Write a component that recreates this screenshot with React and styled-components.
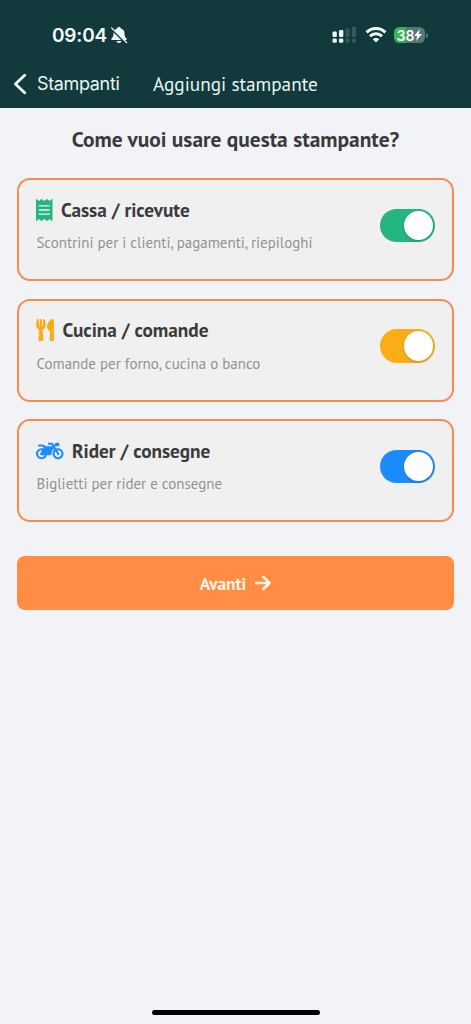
import { useState } from "react";
import styled, { createGlobalStyle } from "styled-components";
import { FaMotorcycle, FaReceipt, FaUtensils } from "react-icons/fa";

const GlobalStyle = createGlobalStyle`
  * {
    box-sizing: border-box;
  }

  body {
    margin: 0;
    background: #f1f3f7;
    font-family: "PT Sans", "Open Sans", "Noto Sans", sans-serif;
    color: #3a3a3c;
  }
`;

const Screen = styled.div`
  width: 100%;
  max-width: 471px;
  height: 1024px;
  display: flex;
  flex-direction: column;
  background: #f1f3f7;
`;

const Header = styled.header`
  height: 107.5px;
  background: #12393b;
  color: #e6f6f4;
`;

const StatusBar = styled.div`
  height: 60px;
  padding: 10px 43.5px 0 52px;
  display: flex;
  align-items: center;
  justify-content: space-between;
`;

const StatusGroup = styled.div`
  display: flex;
  align-items: center;
  gap: ${({ $gap }) => $gap}px;
`;

const Clock = styled.span`
  padding-top: 1px;
  font-family: Inter, sans-serif;
  font-size: 19px;
  font-weight: 600;
  line-height: 24px;
  letter-spacing: -0.2px;
  color: #f4fffc;
`;

const Battery = styled.div`
  display: flex;
  align-items: center;
  gap: 1px;
`;

const BatteryBody = styled.div`
  width: 31px;
  height: 16.5px;
  border-radius: 5.5px;
  display: flex;
  align-items: center;
  justify-content: center;
  background: linear-gradient(90deg, #34b752 38%, #577674 38%);
  font-family: Inter, sans-serif;
  font-size: 14px;
  font-weight: 600;
  color: #ffffff;
`;

const BatteryCap = styled.div`
  width: 1.5px;
  height: 5px;
  border-radius: 0 2px 2px 0;
  background: #577674;
`;

const NavBar = styled.nav`
  height: 47px;
  padding-left: 13px;
  display: flex;
  align-items: center;
`;

const BackButton = styled.button`
  width: 140px;
  padding: 0;
  border: 0;
  display: flex;
  align-items: center;
  gap: 10px;
  background: none;
  color: inherit;
  font-family: Inter, sans-serif;
  font-size: 18px;
  letter-spacing: -0.35px;
  cursor: pointer;
`;

const NavTitle = styled.span`
  font-size: 19.25px;
  line-height: 24px;
`;

const Content = styled.main`
  flex: 1;
  padding: 16.5px 17px 0;
  display: flex;
  flex-direction: column;
`;

const Question = styled.h1`
  margin: 0 0 24px;
  font-size: 21.4px;
  font-weight: 700;
  line-height: 30px;
  text-align: center;
`;

const CardList = styled.div`
  display: flex;
  flex-direction: column;
  gap: 17.5px;
`;

const Card = styled.section`
  height: 103px;
  padding: 0 17px 0 17.4px;
  border: 2px solid #f58d50;
  border-radius: 13px;
  display: flex;
  justify-content: space-between;
  background: #f0f0f0;
`;

const CardTitle = styled.h2`
  margin: 16.9px 0 0;
  height: 26px;
  display: flex;
  align-items: center;
  gap: 8px;
  font-size: 19.25px;
  font-weight: 700;
  line-height: 26px;

  svg {
    width: ${({ $iconWidth }) => $iconWidth}px;
    height: 22px;
    flex: none;
    color: ${({ $color }) => $color};
  }
`;

const CardText = styled.p`
  margin: 9.6px 0 0;
  font-size: 15px;
  line-height: 22px;
  color: #929295;
`;

const Switch = styled.button`
  width: 55px;
  height: 33.5px;
  margin-top: 28.5px;
  padding: 2px;
  border: 0;
  border-radius: 17px;
  display: flex;
  justify-content: ${({ $on }) => ($on ? "flex-end" : "flex-start")};
  background: ${({ $on, $color }) => ($on ? $color : "#d1d1d6")};
  cursor: pointer;
`;

const Knob = styled.span`
  width: 29.5px;
  height: 29.5px;
  border-radius: 50%;
  background: #ffffff;
  box-shadow: 0 1px 3px rgba(0, 0, 0, 0.2);
`;

const NextButton = styled.button`
  height: 54px;
  margin-top: 34px;
  border: 0;
  border-radius: 8px;
  display: flex;
  align-items: center;
  justify-content: center;
  gap: 9px;
  background: #ff8d44;
  color: #fff5e6;
  font-family: inherit;
  font-size: 17.3px;
  font-weight: 700;
  cursor: pointer;
`;

const HomeIndicator = styled.div`
  width: 168px;
  height: 5px;
  margin: 0 auto 9px;
  border-radius: 3px;
  background: #000000;
`;

const ROLES = [
  {
    id: "receipts",
    title: "Cassa / ricevute",
    text: "Scontrini per i clienti, pagamenti, riepiloghi",
    color: "#25b581",
    icon: FaReceipt,
    iconWidth: 16.5,
  },
  {
    id: "kitchen",
    title: "Cucina / comande",
    text: "Comande per forno, cucina o banco",
    color: "#fbad18",
    icon: FaUtensils,
    iconWidth: 18,
  },
  {
    id: "rider",
    title: "Rider / consegne",
    text: "Biglietti per rider e consegne",
    color: "#1b8cfd",
    icon: FaMotorcycle,
    iconWidth: 27.5,
  },
];

function BellOffIcon() {
  return (
    <svg width="18" height="18" viewBox="0 0 18 18" fill="#f4fffc">
      <path d="M9 1c1 0 1.700.6 1.900 1.400 2.400.7 3.600 2.500 3.600 5 0 3 .8 3.900 2 5.200.6.700.2 1.500-.7 1.500H2.200c-.9 0-1.300-.8-.7-1.500 1.200-1.300 2-2.200 2-5.200 0-2.500 1.200-4.300 3.600-5C7.300 1.600 8 1 9 1zM6.500 15h5c-.2 1.300-1.200 2-2.500 2s-2.300-.7-2.500-2z" />
      <path d="M1 2.500 15.800 16.900" stroke="#12393b" strokeWidth="2.200" />
      <path d="M1.600 1.900 16.800 16.700" stroke="#f4fffc" strokeWidth="1.200" strokeLinecap="round" />
    </svg>
  );
}

function SignalIcon() {
  return (
    <svg width="25" height="18" viewBox="0 0 25 18" fill="#f4fffc">
      <rect x="0.500" y="5.500" width="4.300" height="5.500" rx="1.200" />
      <rect x="7" y="4" width="4.300" height="7" rx="1.200" />
      <rect x="0.500" y="12.500" width="4.300" height="4.300" rx="1.400" />
      <rect x="7" y="12.500" width="4.300" height="4.300" rx="1.400" />
      <g fill="#365b5a">
        <rect x="13.500" y="2.500" width="4" height="8.500" rx="1.200" />
        <rect x="20" y="0.800" width="4" height="10.200" rx="1.200" />
        <rect x="13.500" y="12.500" width="4" height="4.300" rx="1.400" />
        <rect x="20" y="12.500" width="4" height="4.300" rx="1.400" />
      </g>
    </svg>
  );
}

function WifiIcon() {
  return (
    <svg width="22" height="16" viewBox="0 0 22 16" fill="none" stroke="#f4fffc" strokeWidth="3">
      <path d="M1.600 5.400a13.300 13.300 0 0 1 18.800 0" />
      <path d="M5 9.200a8.600 8.600 0 0 1 12 0" />
      <path d="M11 15.600 7.700 12.300a4.700 4.700 0 0 1 6.600 0z" fill="#f4fffc" stroke="none" />
    </svg>
  );
}

function BoltIcon() {
  return (
    <svg width="8" height="12" viewBox="0 0 8 12" fill="#ffffff">
      <path d="M5.800 0 .1 6.900h3L2.100 12l5.800-7H4.700z" />
    </svg>
  );
}

function BackIcon() {
  return (
    <svg width="14" height="22" viewBox="0 0 14 22" fill="none" stroke="#f4fffc" strokeWidth="2.800" strokeLinecap="round" strokeLinejoin="round">
      <path d="M11.700 2.300 2.400 11l9.300 8.700" />
    </svg>
  );
}

function ArrowIcon() {
  return (
    <svg width="16" height="16" viewBox="0 0 16 16" fill="none" stroke="currentColor" strokeWidth="2.700" strokeLinecap="round" strokeLinejoin="round">
      <path d="M1.400 8h12.800M8.400 1.900 14.500 8l-6.100 6.100" />
    </svg>
  );
}

function RoleCard({ role }) {
  const [on, setOn] = useState(true);
  const Icon = role.icon;

  return (
    <Card>
      <div>
        <CardTitle $color={role.color} $iconWidth={role.iconWidth}>
          <Icon />
          {role.title}
        </CardTitle>
        <CardText>{role.text}</CardText>
      </div>
      <Switch
        type="button"
        role="switch"
        aria-checked={on}
        $on={on}
        $color={role.color}
        onClick={() => setOn(!on)}
      >
        <Knob />
      </Switch>
    </Card>
  );
}

export default function App() {
  return (
    <>
      <GlobalStyle />
      <Screen>
        <Header>
          <StatusBar>
            <StatusGroup $gap={3.5}>
              <Clock>09:04</Clock>
              <BellOffIcon />
            </StatusGroup>
            <StatusGroup $gap={7.5}>
              <SignalIcon />
              <WifiIcon />
              <Battery>
                <BatteryBody>
                  38
                  <BoltIcon />
                </BatteryBody>
                <BatteryCap />
              </Battery>
            </StatusGroup>
          </StatusBar>
          <NavBar>
            <BackButton type="button">
              <BackIcon />
              Stampanti
            </BackButton>
            <NavTitle>Aggiungi stampante</NavTitle>
          </NavBar>
        </Header>

        <Content>
          <Question>Come vuoi usare questa stampante?</Question>
          <CardList>
            {ROLES.map((role) => (
              <RoleCard key={role.id} role={role} />
            ))}
          </CardList>
          <NextButton type="button">
            Avanti
            <ArrowIcon />
          </NextButton>
        </Content>
        <HomeIndicator />
      </Screen>
    </>
  );
}
